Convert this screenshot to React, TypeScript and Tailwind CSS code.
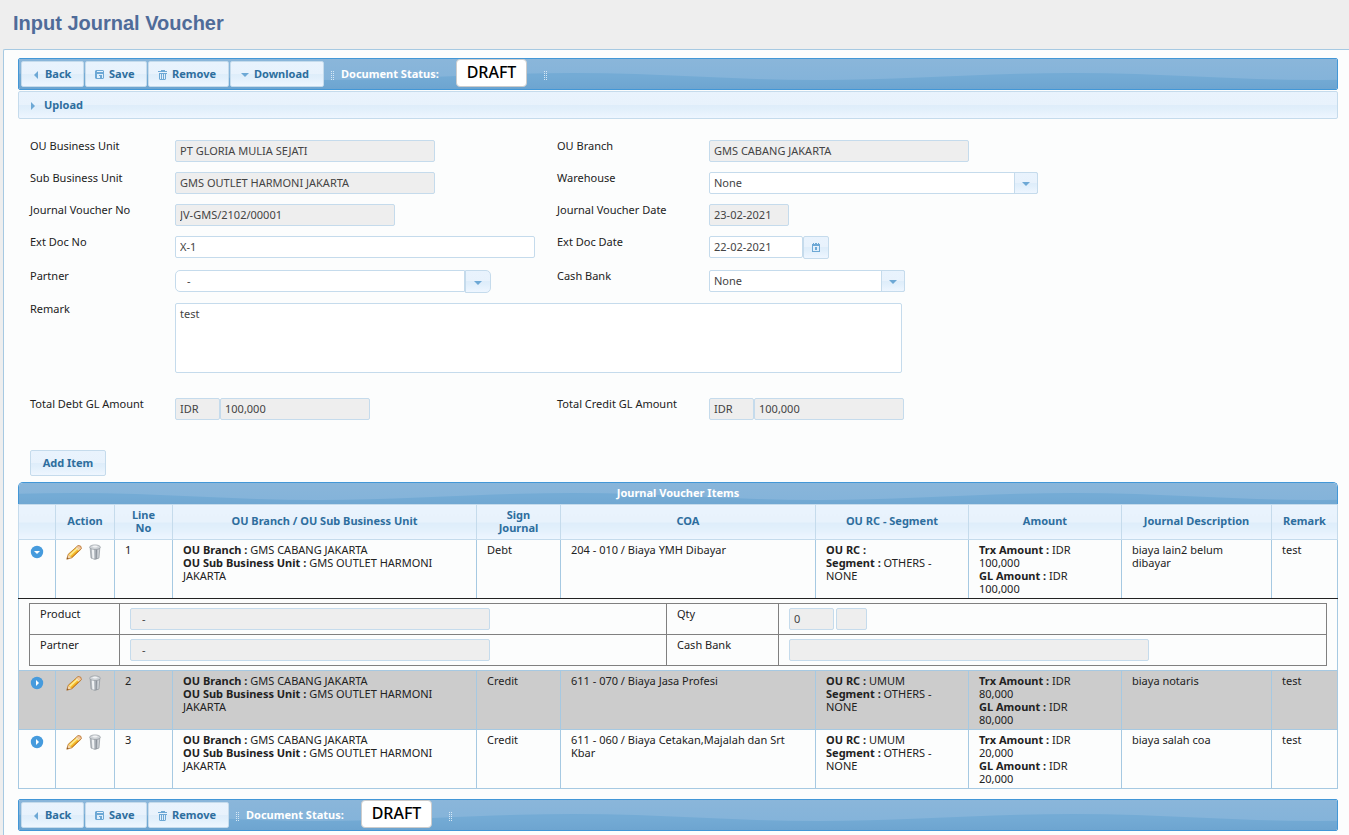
import { ReactNode, useId, useState } from "react"
import clsx from "clsx"

type Item = {
    no: number
    sign: string
    coa: string
    rc: string
    amount: string
    description: string
}

const ITEMS: Item[] = [
    {
        no: 1,
        sign: "Debt",
        coa: "204 - 010 / Biaya YMH Dibayar",
        rc: "",
        amount: "100,000",
        description: "biaya lain2 belum dibayar",
    },
    {
        no: 2,
        sign: "Credit",
        coa: "611 - 070 / Biaya Jasa Profesi",
        rc: "UMUM",
        amount: "80,000",
        description: "biaya notaris",
    },
    {
        no: 3,
        sign: "Credit",
        coa: "611 - 060 / Biaya Cetakan,Majalah dan Srt Kbar",
        rc: "UMUM",
        amount: "20,000",
        description: "biaya salah coa",
    },
]

const COLUMNS = [
    { title: "", width: "w-[37px]" },
    { title: "Action", width: "w-[59px]" },
    { title: "Line No", width: "w-[58px]" },
    { title: "OU Branch / OU Sub Business Unit", width: "w-[304px]" },
    { title: "Sign Journal", width: "w-[84px]" },
    { title: "COA", width: "w-[255px]" },
    { title: "OU RC - Segment", width: "w-[153px]" },
    { title: "Amount", width: "w-[153px]" },
    { title: "Journal Description", width: "w-[150px]" },
    { title: "Remark", width: "w-[66px]" },
]

const GLASS =
    "bg-[linear-gradient(#e9f3fd_0%,#e8f2fc_49%,#deedfa_50%,#e1effb_65%,#eef6ff_100%)]"
const FIELD =
    "h-[22px] rounded-xs border border-[#c5dbec] px-1 pb-[2px] text-[#444] outline-none"

// glossy wave that repeats every 500px; top moves it in shorter bars
function Wave({ top = 0 }: { top?: number }) {
    const id = useId()
    return (
        <svg className="absolute inset-0 size-full" aria-hidden="true">
            <defs>
                <linearGradient id={id + "g"} x1="0" y1="0" x2="0" y2="1">
                    <stop offset="0" stopColor="#8ab6da" />
                    <stop offset="1" stopColor="#7fb1d9" />
                </linearGradient>
                <linearGradient id={id + "d"} x1="0" y1="0" x2="0" y2="1">
                    <stop offset="0.2" stopColor="#74abd5" />
                    <stop offset="1" stopColor="#6ba2ce" />
                </linearGradient>
                <pattern
                    id={id + "p"}
                    y={top}
                    width="500"
                    height="40"
                    patternUnits="userSpaceOnUse"
                >
                    <rect width="500" height="40" fill={`url(#${id}g)`} />
                    <path
                        d="M-200 21C-115 21 -30 14 55 14C140 14 215 21 300 21C385 21 470 14 555 14V34H-200Z"
                        fill={`url(#${id}d)`}
                    />
                </pattern>
            </defs>
            <rect width="100%" height="100%" fill={`url(#${id}p)`} />
        </svg>
    )
}

function Triangle({ dir }: { dir: "left" | "right" | "down" }) {
    const paths = {
        left: "M10 5V13L6 9Z",
        right: "M6 5V13L10 9Z",
        down: "M4 7H12L8 11Z",
    }
    return (
        <svg className="size-4 shrink-0" viewBox="0 0 16 16" fill="#6da8d5">
            <path d={paths[dir]} />
        </svg>
    )
}

function DiskIcon() {
    return (
        <svg className="size-4 shrink-0" viewBox="0 0 16 16" fill="#6da8d5">
            <path
                fillRule="evenodd"
                d="M4 4H11L12 5V12L11 13H4L3 12V5ZM5 5V6H11V5ZM5 8V12H7V9H10V12H11V8ZM7 10V12H8V10Z"
            />
        </svg>
    )
}

function BinIcon() {
    return (
        <svg className="size-4 shrink-0" viewBox="0 0 16 16" fill="#6da8d5">
            <path
                fillRule="evenodd"
                d="M6 4H10V5H12V6H3V5H6ZM4 7H12V8H11V13L10 14H5L4 13ZM5 8V13H6V8ZM7 8V13H8V8ZM9 8V13H10V8Z"
            />
        </svg>
    )
}

function CalendarIcon() {
    return (
        <svg className="size-4" viewBox="0 0 16 16" fill="#6da8d5">
            <path
                fillRule="evenodd"
                d="M4 4H5V3H6V4H7V3H9V4H10V3H11V4H12V12H4ZM5 6V11H11V6ZM7 7H9V10H7Z"
            />
        </svg>
    )
}

function PencilIcon() {
    return (
        <svg className="size-4" viewBox="0 0 16 16">
            <path d="M1 15L2.500 10L11 2.500L14.500 5.500L6 13.500Z" fill="#f6c02e" />
            <path d="M3 10.800L11 3.500L12.200 4.500L4.200 12Z" fill="#fdeb96" />
            <path d="M5.200 13L13.700 5.200L14.500 6L6 13.800Z" fill="#e0921c" />
            <path d="M10.500 3L12.500 1.300Q15.700 1.500 15.500 4.500L14 6Z" fill="#f2c9a4" />
            <path d="M10.200 3L14 6.300L13.200 7L9.500 3.700Z" fill="#ece4d0" />
            <path d="M2.300 10.500L5.500 13.700L.8 15.200Z" fill="#f7dcb4" />
            <path d="M1.300 13.300L2.800 14.600L.8 15.200Z" fill="#3a2a18" />
            <path
                d="M.8 15.200L2.200 10.300L12 1.500Q15.700 1.200 15.400 4.700L5.800 13.800Z"
                fill="none"
                stroke="#b5702a"
                strokeWidth=".8"
            />
        </svg>
    )
}

function TrashIcon() {
    return (
        <svg className="size-4" viewBox="0 0 16 16">
            <path
                d="M3.200 4L4 14Q8 16.800 12 14L12.800 4Z"
                fill="#b4bac0"
                stroke="#8b9299"
                strokeWidth=".6"
            />
            <path d="M4.800 5L5.400 14.500H7.300L7 5Z" fill="#f0f2f4" />
            <path d="M8.800 5.500L8.600 15H9.700L10 5.500Z" fill="#8c939b" />
            <path d="M10.800 5.500L10.500 14H11.300L11.900 5.500Z" fill="#d5d9dd" />
            <ellipse
                cx="8"
                cy="3.200"
                rx="5.400"
                ry="2.300"
                fill="#d0d4d8"
                stroke="#8d949b"
                strokeWidth=".6"
            />
            <path d="M5 2.600Q8 .5 11 2.600Q8 4.400 5 2.600Z" fill="#f1f2f4" />
        </svg>
    )
}

function ToggleIcon({ open }: { open: boolean }) {
    return (
        <svg className="size-4" viewBox="0 0 16 16">
            <circle cx="8" cy="8" r="6.200" fill="#469bdd" />
            <path d={open ? "M5 7H11L8 10Z" : "M7 5V11L10 8Z"} fill="#fff" />
        </svg>
    )
}

function Grip() {
    return (
        <svg className="mt-[2px] h-[9px] w-[5px] shrink-0" viewBox="0 0 5 9">
            {[0, 2, 4, 6, 8].map((y) => (
                <path
                    key={y}
                    d={`M1 ${y}h1v1h-1zM3 ${y}h1v1h-1z`}
                    fill="#d6e8f6"
                />
            ))}
        </svg>
    )
}

function ToolButton({
    icon,
    width,
    children,
}: {
    icon: ReactNode
    width: string
    children: string
}) {
    return (
        <button
            className={clsx(
                "flex h-[26px] items-center rounded-xs border border-[#c5dbec] pl-[6px] font-bold text-[#2e6e9e]",
                GLASS,
                width
            )}
        >
            {icon}
            <span className="pb-[2px] pl-px">{children}</span>
        </button>
    )
}

function Toolbar({ download }: { download?: boolean }) {
    return (
        <div className="relative h-8 overflow-hidden rounded-xs border border-[#4297d7]">
            <Wave />
            <div className="relative flex h-full items-center gap-px pl-[2px]">
                <ToolButton icon={<Triangle dir="left" />} width="w-[63px]">
                    Back
                </ToolButton>
                <ToolButton icon={<DiskIcon />} width="w-[62px]">
                    Save
                </ToolButton>
                <ToolButton icon={<BinIcon />} width="w-[81px]">
                    Remove
                </ToolButton>
                {download && (
                    <ToolButton icon={<Triangle dir="down" />} width="w-[94px]">
                        Download
                    </ToolButton>
                )}
                <div className="flex items-center pl-[5px]">
                    <Grip />
                    <span className="w-[121px] pb-[2px] pl-[6px] font-bold whitespace-nowrap text-white">
                        Document Status:
                    </span>
                    <span className="mr-4 mb-[2px] flex h-7 w-[71px] items-center justify-center rounded border border-[#ccc] bg-white pb-[2px] text-[16px] font-medium text-black">
                        DRAFT
                    </span>
                    <Grip />
                </div>
            </div>
        </div>
    )
}

function Label({ id, children }: { id: string; children: string }) {
    return (
        <label htmlFor={id} className="h-3 leading-3 whitespace-nowrap">
            {children}
        </label>
    )
}

function ReadOnly({
    id,
    label,
    value,
    className,
}: {
    id?: string
    label?: string
    value: string
    className: string
}) {
    return (
        <input
            id={id}
            aria-label={label}
            readOnly
            value={value}
            className={clsx(FIELD, "bg-[#eee]", className)}
        />
    )
}

function Dropdown({ id, width }: { id: string; width: string }) {
    return (
        <div className={clsx("relative", width)}>
            <select
                id={id}
                className={clsx(FIELD, "block w-full appearance-none bg-white")}
            >
                <option>None</option>
            </select>
            <span
                className={clsx(
                    "pointer-events-none absolute top-0 right-0 flex h-[22px] w-6 items-center justify-center rounded-r-xs border border-[#c5dbec]",
                    GLASS
                )}
            >
                <Triangle dir="down" />
            </span>
        </div>
    )
}

function Form() {
    return (
        <div className="grid grid-cols-[145px_382px_152px_1fr] grid-rows-[32px_32px_32px_34px_33px_95px_52px] pt-[21px] pl-3">
            <Label id="ou">OU Business Unit</Label>
            <div>
                <ReadOnly
                    id="ou"
                    value="PT GLORIA MULIA SEJATI"
                    className="w-[260px]"
                />
            </div>
            <Label id="branch">OU Branch</Label>
            <div>
                <ReadOnly
                    id="branch"
                    value="GMS CABANG JAKARTA"
                    className="w-[260px]"
                />
            </div>

            <Label id="sub">Sub Business Unit</Label>
            <div>
                <ReadOnly
                    id="sub"
                    value="GMS OUTLET HARMONI JAKARTA"
                    className="w-[260px]"
                />
            </div>
            <Label id="warehouse">Warehouse</Label>
            <Dropdown id="warehouse" width="w-[329px]" />

            <Label id="jv">Journal Voucher No</Label>
            <div>
                <ReadOnly
                    id="jv"
                    value="JV-GMS/2102/00001"
                    className="w-[220px]"
                />
            </div>
            <Label id="jvdate">Journal Voucher Date</Label>
            <div>
                <ReadOnly id="jvdate" value="23-02-2021" className="w-20" />
            </div>

            <Label id="ext">Ext Doc No</Label>
            <div>
                <input
                    id="ext"
                    defaultValue="X-1"
                    className={clsx(FIELD, "w-[360px] bg-white")}
                />
            </div>
            <Label id="extdate">Ext Doc Date</Label>
            <div className="flex items-start">
                <input
                    id="extdate"
                    defaultValue="22-02-2021"
                    className={clsx(FIELD, "w-[94px] bg-white")}
                />
                <button
                    aria-label="Pick date"
                    className={clsx(
                        "flex h-[23px] w-[26px] items-center justify-center rounded-xs border border-[#c5dbec]",
                        GLASS
                    )}
                >
                    <CalendarIcon />
                </button>
            </div>

            <Label id="partner">Partner</Label>
            <div className="flex items-start">
                <input
                    id="partner"
                    defaultValue="-"
                    className="h-[22px] w-[290px] rounded-l-[5px] border border-[#c5dbec] bg-white pb-[2px] pl-[11px] text-[#444] outline-none"
                />
                <button
                    aria-label="Show partners"
                    className={clsx(
                        "flex h-[23px] w-[26px] items-center justify-center rounded-r-[5px] border border-[#c5dbec]",
                        GLASS
                    )}
                >
                    <Triangle dir="down" />
                </button>
            </div>
            <Label id="cash">Cash Bank</Label>
            <Dropdown id="cash" width="w-[196px]" />

            <Label id="remark">Remark</Label>
            <textarea
                id="remark"
                defaultValue="test"
                className="col-span-3 h-[70px] w-[727px] resize-none rounded-xs border border-[#c5dbec] bg-white px-1 py-[3px] text-[#444] outline-none"
            />

            <Label id="debt">Total Debt GL Amount</Label>
            <div className="flex items-start">
                <ReadOnly label="Currency" value="IDR" className="w-[45px]" />
                <ReadOnly id="debt" value="100,000" className="w-[150px]" />
            </div>
            <Label id="credit">Total Credit GL Amount</Label>
            <div className="flex items-start">
                <ReadOnly label="Currency" value="IDR" className="w-[45px]" />
                <ReadOnly id="credit" value="100,000" className="w-[150px]" />
            </div>
        </div>
    )
}

function Detail() {
    const cell = "border border-[#808080] px-[10px] py-1 align-top"
    const labelCell = "border border-[#808080] px-[10px] py-[3px] align-top"
    return (
        <table className="w-full table-fixed border-collapse">
            <colgroup>
                <col className="w-[90px]" />
                <col className="w-[547px]" />
                <col className="w-[112px]" />
                <col className="w-[548px]" />
            </colgroup>
            <tbody>
                <tr>
                    <td className={labelCell}>
                        <label htmlFor="d-product">Product</label>
                    </td>
                    <td className={cell}>
                        <ReadOnly
                            id="d-product"
                            value="-"
                            className="block w-[360px] pl-[11px]!"
                        />
                    </td>
                    <td className={labelCell}>
                        <label htmlFor="d-qty">Qty</label>
                    </td>
                    <td className={cell}>
                        <div className="flex gap-[2px]">
                            <ReadOnly
                                id="d-qty"
                                value="0"
                                className="w-[45px]"
                            />
                            <ReadOnly
                                label="Unit"
                                value=""
                                className="w-[31px]"
                            />
                        </div>
                    </td>
                </tr>
                <tr>
                    <td className={labelCell}>
                        <label htmlFor="d-partner">Partner</label>
                    </td>
                    <td className={cell}>
                        <ReadOnly
                            id="d-partner"
                            value="-"
                            className="block w-[360px] pl-[11px]!"
                        />
                    </td>
                    <td className={labelCell}>
                        <label htmlFor="d-cash">Cash Bank</label>
                    </td>
                    <td className={cell}>
                        <ReadOnly
                            id="d-cash"
                            value=""
                            className="block w-[360px]"
                        />
                    </td>
                </tr>
            </tbody>
        </table>
    )
}

function ItemRows({ item }: { item: Item }) {
    const [open, setOpen] = useState(item.no === 1)
    const cell = clsx(
        "border-x border-t border-[#a6c9e2] px-[10px] py-[3px] align-top",
        open ? "border-b border-b-[#222]" : "border-b"
    )
    return (
        <>
            <tr className={item.no % 2 ? "bg-[#fcfdfd]" : "bg-[#ccc]"}>
                <td className={cell}>
                    <button
                        aria-label="Toggle detail"
                        className="mt-px block"
                        onClick={() => setOpen(!open)}
                    >
                        <ToggleIcon open={open} />
                    </button>
                </td>
                <td className={cell}>
                    <div className="mt-px flex gap-[5px]">
                        <button aria-label="Edit">
                            <PencilIcon />
                        </button>
                        <button aria-label="Delete">
                            <TrashIcon />
                        </button>
                    </div>
                </td>
                <td className={cell}>{item.no}</td>
                <td className={cell}>
                    <b>OU Branch :</b> GMS CABANG JAKARTA
                    <br />
                    <b>OU Sub Business Unit :</b> GMS OUTLET HARMONI JAKARTA
                </td>
                <td className={cell}>{item.sign}</td>
                <td className={cell}>{item.coa}</td>
                <td className={cell}>
                    <b>OU RC :</b> {item.rc}
                    <br />
                    <b>Segment :</b> OTHERS -<br />
                    NONE
                </td>
                <td className={cell}>
                    <b>Trx Amount :</b> IDR
                    <br />
                    {item.amount}
                    <br />
                    <b>GL Amount :</b> IDR
                    <br />
                    {item.amount}
                </td>
                <td className={cell}>{item.description}</td>
                <td className={cell}>test</td>
            </tr>
            {open && (
                <tr>
                    <td
                        colSpan={10}
                        className="border-x border-b border-[#a6c9e2] px-[10px] py-1"
                    >
                        <Detail />
                    </td>
                </tr>
            )}
        </>
    )
}

function App() {
    return (
        <div className="flex min-h-screen flex-col bg-[#eee] font-['Noto_Sans','Open_Sans',sans-serif] text-[11px] leading-[13px] text-[#222]">
            <h1 className="h-[49px] pt-[9px] pl-[13px] font-['Liberation_Sans',Arial,sans-serif] text-[20px] leading-7 font-bold text-[#4f6b99]">
                Input Journal Voucher
            </h1>
            <main className="ml-[3px] flex-1 rounded-tl-xs border-t border-l border-[#a6c9e2] bg-[#fcfdfd] pt-2 pr-[11px] pl-[14px]">
                <Toolbar download />
                <button
                    className={clsx(
                        "mt-px flex h-7 w-full items-center rounded-xs border border-[#c5dbec] pl-[6px] font-bold text-[#2e6e9e]",
                        GLASS
                    )}
                >
                    <Triangle dir="right" />
                    <span className="pb-[2px] pl-[3px]">Upload</span>
                </button>
                <Form />
                <button
                    className={clsx(
                        "ml-3 block h-[26px] w-[76px] rounded-xs border border-[#c5dbec] pb-[2px] font-bold text-[#2e6e9e]",
                        GLASS
                    )}
                >
                    Add Item
                </button>
                <h2 className="relative mt-[6px] h-[22px] overflow-hidden rounded-t-[5px] border border-b-0 border-[#4297d7] text-center leading-5 font-bold text-white">
                    <Wave top={-4} />
                    <span className="relative">Journal Voucher Items</span>
                </h2>
                <div className="pr-px">
                    <table className="w-full table-fixed border-collapse">
                        <colgroup>
                            {COLUMNS.map((c, i) => (
                                <col key={i} className={c.width} />
                            ))}
                        </colgroup>
                        <thead>
                            <tr className="h-[35px]">
                                {COLUMNS.map((c, i) => (
                                    <th
                                        key={i}
                                        className={clsx(
                                            "border border-[#c5dbec] pb-[3px] font-bold text-[#2e6e9e]",
                                            GLASS,
                                            i === 2 || i === 4 ? "px-3" : "px-1"
                                        )}
                                    >
                                        {c.title}
                                    </th>
                                ))}
                            </tr>
                        </thead>
                        <tbody>
                            {ITEMS.map((item) => (
                                <ItemRows key={item.no} item={item} />
                            ))}
                        </tbody>
                    </table>
                </div>
                <div className="pt-[10px]">
                    <Toolbar />
                </div>
            </main>
        </div>
    )
}

export default App
